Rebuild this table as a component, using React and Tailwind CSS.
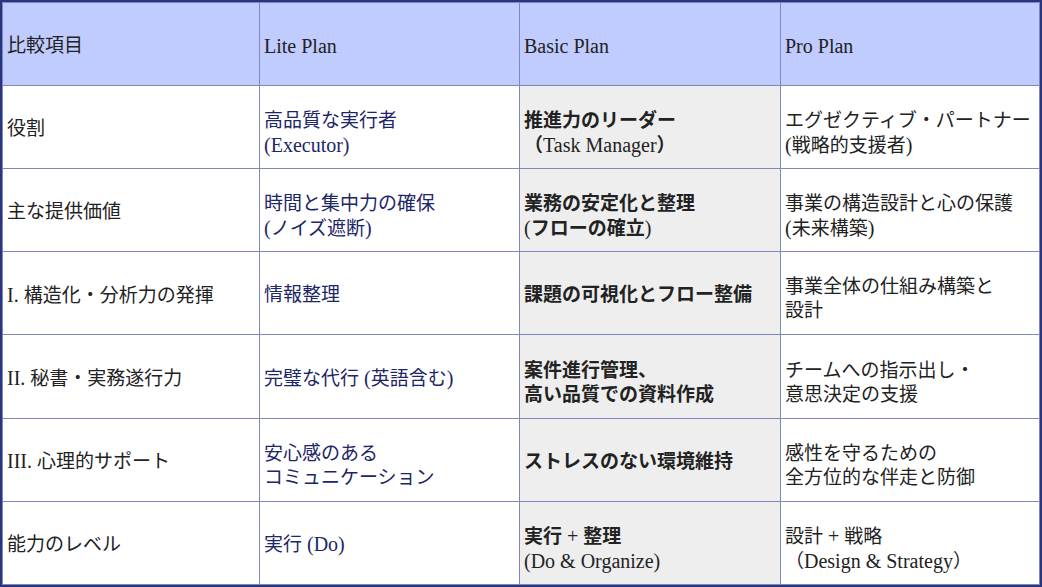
import React from "react";

const rows = [
  {
    item: ["役割"],
    lite: ["高品質な実行者", "(Executor)"],
    basic: ["推進力のリーダー", "（Task Manager）"],
    pro: ["エグゼクティブ・パートナー", "(戦略的支援者)"],
  },
  {
    item: ["主な提供価値"],
    lite: ["時間と集中力の確保", "(ノイズ遮断)"],
    basic: ["業務の安定化と整理", "(フローの確立)"],
    pro: ["事業の構造設計と心の保護", "(未来構築)"],
  },
  {
    item: ["I. 構造化・分析力の発揮"],
    lite: ["情報整理"],
    basic: ["課題の可視化とフロー整備"],
    pro: ["事業全体の仕組み構築と", "設計"],
  },
  {
    item: ["II. 秘書・実務遂行力"],
    lite: ["完璧な代行 (英語含む)"],
    basic: ["案件進行管理、", "高い品質での資料作成"],
    pro: ["チームへの指示出し・", "意思決定の支援"],
  },
  {
    item: ["III. 心理的サポート"],
    lite: ["安心感のある", "コミュニケーション"],
    basic: ["ストレスのない環境維持"],
    pro: ["感性を守るための", "全方位的な伴走と防御"],
  },
  {
    item: ["能力のレベル"],
    lite: ["実行 (Do)"],
    basic: ["実行 + 整理", "(Do & Organize)"],
    pro: ["設計 + 戦略", "（Design & Strategy）"],
  },
];

// latin runs are a touch larger and never bold, like the original sheet
const Mixed = ({ text }) =>
  text.split(/([\x20-\x7e]+)/).map((part, i) =>
    /^[\x20-\x7e]+$/.test(part) ? (
      <span key={i} className="text-[20px] font-normal">
        {part}
      </span>
    ) : (
      part
    )
  );

const Lines = ({ lines }) =>
  lines.map((l, i) => (
    <span key={i} className="block">
      <Mixed text={l} />
    </span>
  ));

const base = "border border-[#7f88bd] px-[4px] align-middle text-left";
const pad = (lines) => (lines.length > 1 ? "pt-[14px] pb-[2px]" : "pt-[6px] pb-[2px]");

export default function App() {
  return (
    <div
      className="w-[1042px] h-[587px] bg-white border-[2px] border-[#27367f] text-[19px] leading-[24px] text-[#222]"
      style={{ fontFamily: '"Liberation Serif", "Noto Sans CJK JP", serif' }}
    >
      <table className="w-full h-full table-fixed border-collapse">
        <thead>
          <tr className="h-[83px] bg-[#c0cbfe]">
            <th className={`${base} pt-[6px] pb-[2px] w-[257px] font-normal`}>比較項目</th>
            <th className={`${base} pt-[6px] pb-[2px] w-[260px] font-normal`}>
              <Mixed text="Lite Plan" />
            </th>
            <th className={`${base} pt-[6px] pb-[2px] w-[261px] font-normal`}>
              <Mixed text="Basic Plan" />
            </th>
            <th className={`${base} pt-[6px] pb-[2px] font-normal`}>
              <Mixed text="Pro Plan" />
            </th>
          </tr>
        </thead>
        <tbody>
          {rows.map((r, i) => (
            <tr key={i} className="h-[83px]">
              <td className={`${base} ${pad(r.item)}`}>
                <Lines lines={r.item} />
              </td>
              <td className={`${base} ${pad(r.lite)} text-[#1c2668]`}>
                <Lines lines={r.lite} />
              </td>
              <td className={`${base} ${pad(r.basic)} bg-[#eeeeee] font-bold`}>
                <Lines lines={r.basic} />
              </td>
              <td className={`${base} ${pad(r.pro)}`}>
                <Lines lines={r.pro} />
              </td>
            </tr>
          ))}
        </tbody>
      </table>
    </div>
  );
}
